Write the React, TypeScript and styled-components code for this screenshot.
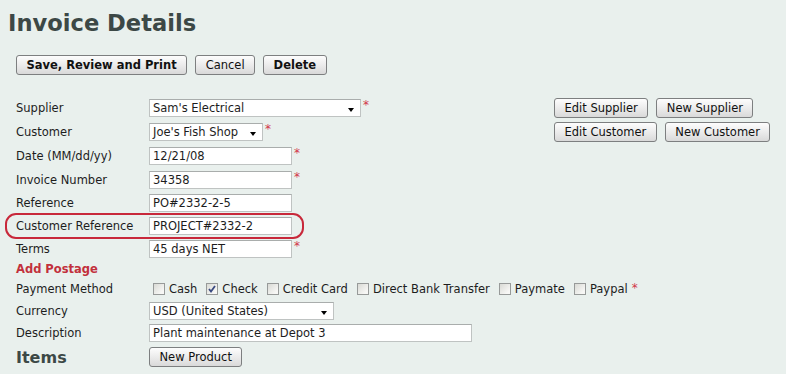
import React from 'react';
import styled, { createGlobalStyle } from 'styled-components';

const GlobalStyle = createGlobalStyle`
  body {
    margin: 0;
    background: #e9f0ed;
    font-family: "DejaVu Sans", Verdana, sans-serif;
    font-size: 11.5px;
    color: #1d1d1d;
  }
`;

const Page = styled.div`
  padding: 0 8px;
  width: 786px;
  height: 374px;
  box-sizing: border-box;
  overflow: hidden;
`;

const Title = styled.h1`
  margin: 0;
  padding-top: 9px;
  font-size: 22.6px;
  line-height: 28px;
  font-weight: bold;
  color: #3c4846;
`;

const Toolbar = styled.div`
  display: flex;
  gap: 8px;
  margin-top: 18px;
  padding-left: 8px;
`;

const Button = styled.button<{ $bold?: boolean }>`
  height: 20px;
  padding: 0 ${p => (p.$bold ? 9.5 : 9.5)}px;
  border: 1px solid #7d7f80;
  border-radius: 3px;
  background: linear-gradient(#fdfdfd, #e8e8e8 60%, #d9d9d9);
  font-family: "DejaVu Sans", Verdana, sans-serif;
  font-size: 11.5px;
  font-weight: ${p => (p.$bold ? 'bold' : 'normal')};
  color: #111;
  line-height: 18px;
  white-space: nowrap;
`;

const Form = styled.div`
  margin-top: 21px;
  padding-left: 8px;
`;

const Row = styled.div<{ $h: number }>`
  position: relative;
  display: grid;
  grid-template-columns: 133px 405px auto;
  align-items: center;
  height: ${p => p.$h}px;
`;

const Label = styled.div`
  white-space: nowrap;
`;

const SectionLabel = styled.div`
  font-weight: bold;
  color: #c2303c;
`;

const ItemsHeading = styled.div`
  font-size: 16px;
  font-weight: bold;
  color: #3c4846;
`;

const Field = styled.div`
  display: flex;
  align-items: center;
  gap: 2px;
`;

const TextInput = styled.div<{ $w: number }>`
  box-sizing: border-box;
  width: ${p => p.$w}px;
  height: 18px;
  padding: 0 3px;
  border: 1px solid #bfc3c2;
  border-top-color: #a9adac;
  background: #fff;
  line-height: 16px;
  white-space: nowrap;
`;

const SelectBox = styled(TextInput)`
  display: flex;
  align-items: center;
  justify-content: space-between;
  padding-right: 6px;
`;

const Arrow = styled.span`
  width: 0;
  height: 0;
  margin-top: 3px;
  border-left: 3.5px solid transparent;
  border-right: 3.5px solid transparent;
  border-top: 4px solid #000;
`;

const Required = styled.span<{ $tight?: boolean }>`
  color: #d2374a;
  font-size: 12px;
  align-self: flex-start;
  margin-top: -1px;
  margin-left: ${p => (p.$tight ? -5 : 0)}px;
`;

const Actions = styled.div`
  display: flex;
  gap: 8px;
`;

const Checks = styled.div`
  display: flex;
  align-items: center;
  gap: 9px;
  padding-left: 4px;
  white-space: nowrap;
`;

const CheckItem = styled.label`
  display: flex;
  align-items: center;
  gap: 4px;
`;

const Box = styled.span`
  box-sizing: border-box;
  width: 12px;
  height: 12px;
  border: 1px solid #979a99;
  background: linear-gradient(135deg, #d9dad5, #f7f7f5 80%);
  display: flex;
  align-items: center;
  justify-content: center;
`;

const Highlight = styled.div`
  position: absolute;
  left: -11px;
  top: -1px;
  width: 299px;
  height: 26px;
  box-sizing: border-box;
  border: 2px solid #c8283a;
  border-radius: 11px;
  pointer-events: none;
`;

const Check = ({ label, checked }: { label: string; checked?: boolean }) => (
  <CheckItem>
    <Box>
      {checked && (
        <svg width="8" height="8" viewBox="0 0 8 8">
          <path d="M1 4 L3 6.5 L7 1" fill="none" stroke="#3a4a80" strokeWidth="1.8" />
        </svg>
      )}
    </Box>
    {label}
  </CheckItem>
);

export default function App() {
  return (
    <Page>
      <GlobalStyle />
      <Title>Invoice Details</Title>
      <Toolbar>
        <Button $bold>Save, Review and Print</Button>
        <Button>Cancel</Button>
        <Button $bold>Delete</Button>
      </Toolbar>
      <Form>
        <Row $h={24}>
          <Label>Supplier</Label>
          <Field>
            <SelectBox $w={212}>Sam's Electrical<Arrow /></SelectBox>
            <Required>*</Required>
          </Field>
          <Actions>
            <Button>Edit Supplier</Button>
            <Button>New Supplier</Button>
          </Actions>
        </Row>
        <Row $h={24}>
          <Label>Customer</Label>
          <Field>
            <SelectBox $w={114}>Joe's Fish Shop<Arrow /></SelectBox>
            <Required>*</Required>
          </Field>
          <Actions>
            <Button>Edit Customer</Button>
            <Button>New Customer</Button>
          </Actions>
        </Row>
        <Row $h={24}>
          <Label>Date (MM/dd/yy)</Label>
          <Field>
            <TextInput $w={143}>12/21/08</TextInput>
            <Required>*</Required>
          </Field>
        </Row>
        <Row $h={23}>
          <Label>Invoice Number</Label>
          <Field>
            <TextInput $w={143}>34358</TextInput>
            <Required>*</Required>
          </Field>
        </Row>
        <Row $h={23}>
          <Label>Reference</Label>
          <Field>
            <TextInput $w={143}>PO#2332-2-5</TextInput>
          </Field>
        </Row>
        <Row $h={23}>
          <Label>Customer Reference</Label>
          <Field>
            <TextInput $w={143}>PROJECT#2332-2</TextInput>
          </Field>
          <Highlight />
        </Row>
        <Row $h={23}>
          <Label>Terms</Label>
          <Field>
            <TextInput $w={143}>45 days NET</TextInput>
            <Required>*</Required>
          </Field>
        </Row>
        <Row $h={18}>
          <SectionLabel>Add Postage</SectionLabel>
        </Row>
        <Row $h={22}>
          <Label>Payment Method</Label>
          <Checks>
            <Check label="Cash" />
            <Check label="Check" checked />
            <Check label="Credit Card" />
            <Check label="Direct Bank Transfer" />
            <Check label="Paymate" />
            <Check label="Paypal" />
            <Required $tight>*</Required>
          </Checks>
        </Row>
        <Row $h={22}>
          <Label>Currency</Label>
          <Field>
            <SelectBox $w={185}>USD (United States)<Arrow /></SelectBox>
          </Field>
        </Row>
        <Row $h={22}>
          <Label>Description</Label>
          <Field>
            <TextInput $w={323}>Plant maintenance at Depot 3</TextInput>
          </Field>
        </Row>
        <Row $h={26}>
          <ItemsHeading>Items</ItemsHeading>
          <Field>
            <Button>New Product</Button>
          </Field>
        </Row>
      </Form>
    </Page>
  );
}
